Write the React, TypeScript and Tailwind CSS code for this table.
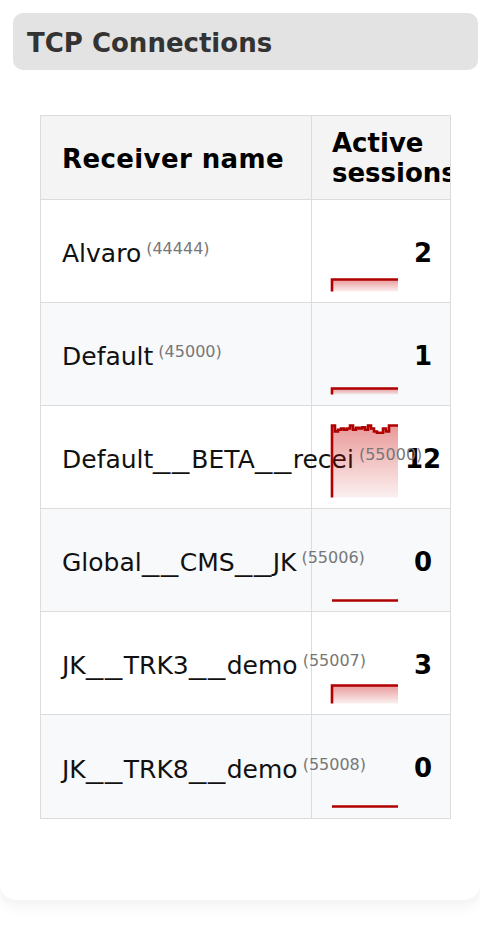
import React from 'react';

interface Receiver {
  name: string;
  port: number;
  sessions: number;
  history: number[];
}

const flat = (v: number) => Array.from({ length: 22 }, () => v);

const receivers: Receiver[] = [
  { name: 'Alvaro', port: 44444, sessions: 2, history: flat(2) },
  { name: 'Default', port: 45000, sessions: 1, history: flat(1) },
  {
    name: 'Default__BETA__recei',
    port: 55000,
    sessions: 12,
    history: [12, 11, 11.3, 11.5, 11.3, 11.5, 12, 11.3, 11.6, 11.5, 11.7, 11.3, 12, 11.5, 11, 10.8, 10.8, 11.5, 11, 12, 12, 12],
  },
  { name: 'Global__CMS__JK', port: 55006, sessions: 0, history: flat(0) },
  { name: 'JK__TRK3__demo', port: 55007, sessions: 3, history: flat(3) },
  { name: 'JK__TRK8__demo', port: 55008, sessions: 0, history: flat(0) },
];

// Small stepped area chart of session count
function Sparkline({ data, id }: { data: number[]; id: string }) {
  const w = 66;
  const base = 73.5;
  const unit = 6;
  const step = w / data.length;
  let line = `M0,${base}`;
  data.forEach((v, i) => {
    const y = base - v * unit;
    line += ` L${i * step},${y} L${(i + 1) * step},${y}`;
  });
  const area = `${line} L${w},${base} Z`;

  return (
    <svg width={w} height={75} viewBox="0 0 66 75" className="shrink-0 overflow-visible">
      <defs>
        <linearGradient id={id} x1="0" y1="0" x2="0" y2="1">
          <stop offset="0%" stopColor="#c80000" stopOpacity="0.4" />
          <stop offset="100%" stopColor="#c80000" stopOpacity="0.06" />
        </linearGradient>
      </defs>
      <path d={area} fill={`url(#${id})`} />
      <path d={line} fill="none" stroke="#b00000" strokeWidth="2.6" />
    </svg>
  );
}

// Underscores in the names render wider (Verdana-like metrics)
function Name({ text }: { text: string }) {
  const parts = text.split(/(_)/);
  return (
    <>
      {parts.map((p, i) =>
        p === '_' ? (
          <span key={i} className="inline-block w-[19px] overflow-visible">
            <span className="inline-block origin-left scale-x-[1.38]">_</span>
          </span>
        ) : (
          <React.Fragment key={i}>{p}</React.Fragment>
        ),
      )}
    </>
  );
}

export default function App() {
  return (
    <div className="min-h-[926px] w-[480px] overflow-hidden bg-white font-['DejaVu_Sans',Verdana,sans-serif]">
      <div className="rounded-b-[16px] bg-white pl-[13px] pr-[2px] pt-[13px] pb-[81px] shadow-[0_6px_14px_rgba(0,0,0,0.06)]">
        {/* Section title */}
        <div className="flex h-[57px] items-center rounded-[10px] bg-[#e3e3e3] px-[14px] pt-[3px]">
          <h2 className="text-[26px] font-bold text-[#333]">TCP Connections</h2>
        </div>

        {/* Table */}
        <div className="mx-[27px] mt-[45px] overflow-hidden border border-[#dcdcdc]">
          <div className="w-[436px]">
            <div className="flex h-[84px] border-b border-[#dcdcdc] bg-[#f4f4f4]">
              <div className="flex w-[271px] shrink-0 items-center border-r border-[#dcdcdc] pl-[21px] pt-[3px] text-[26px] font-bold tracking-[0.4px] text-black">
                Receiver name
              </div>
              <div className="flex items-center pl-[20px] text-[26px] font-bold leading-[30px] text-black">
                Active
                <br />
                sessions
              </div>
            </div>

            {receivers.map((r, i) => (
              <div
                key={r.name}
                className={`flex h-[103px] ${i < receivers.length - 1 ? 'border-b' : ''} border-[#dcdcdc] ${
                  i % 2 === 1 ? 'bg-[#f8f9fb]' : 'bg-white'
                }`}
              >
                <div className="flex w-[271px] shrink-0 items-center whitespace-nowrap border-r border-[#dcdcdc] pl-[21px] pt-[6px] text-[25px] text-[#111]">
                  <span>
                    <Name text={r.name} />
                    <sup className="ml-[5px] text-[16px] text-[#777]">({r.port})</sup>
                  </span>
                </div>
                <div className="flex items-center pl-[20px]">
                  <div className="mt-[8px]">
                    <Sparkline data={r.history} id={`spark-${i}`} />
                  </div>
                  <div className="ml-[2px] w-[46px] pt-[4px] text-center text-[26px] font-bold text-black">
                    {r.sessions}
                  </div>
                </div>
              </div>
            ))}
          </div>
        </div>
      </div>
    </div>
  );
}
